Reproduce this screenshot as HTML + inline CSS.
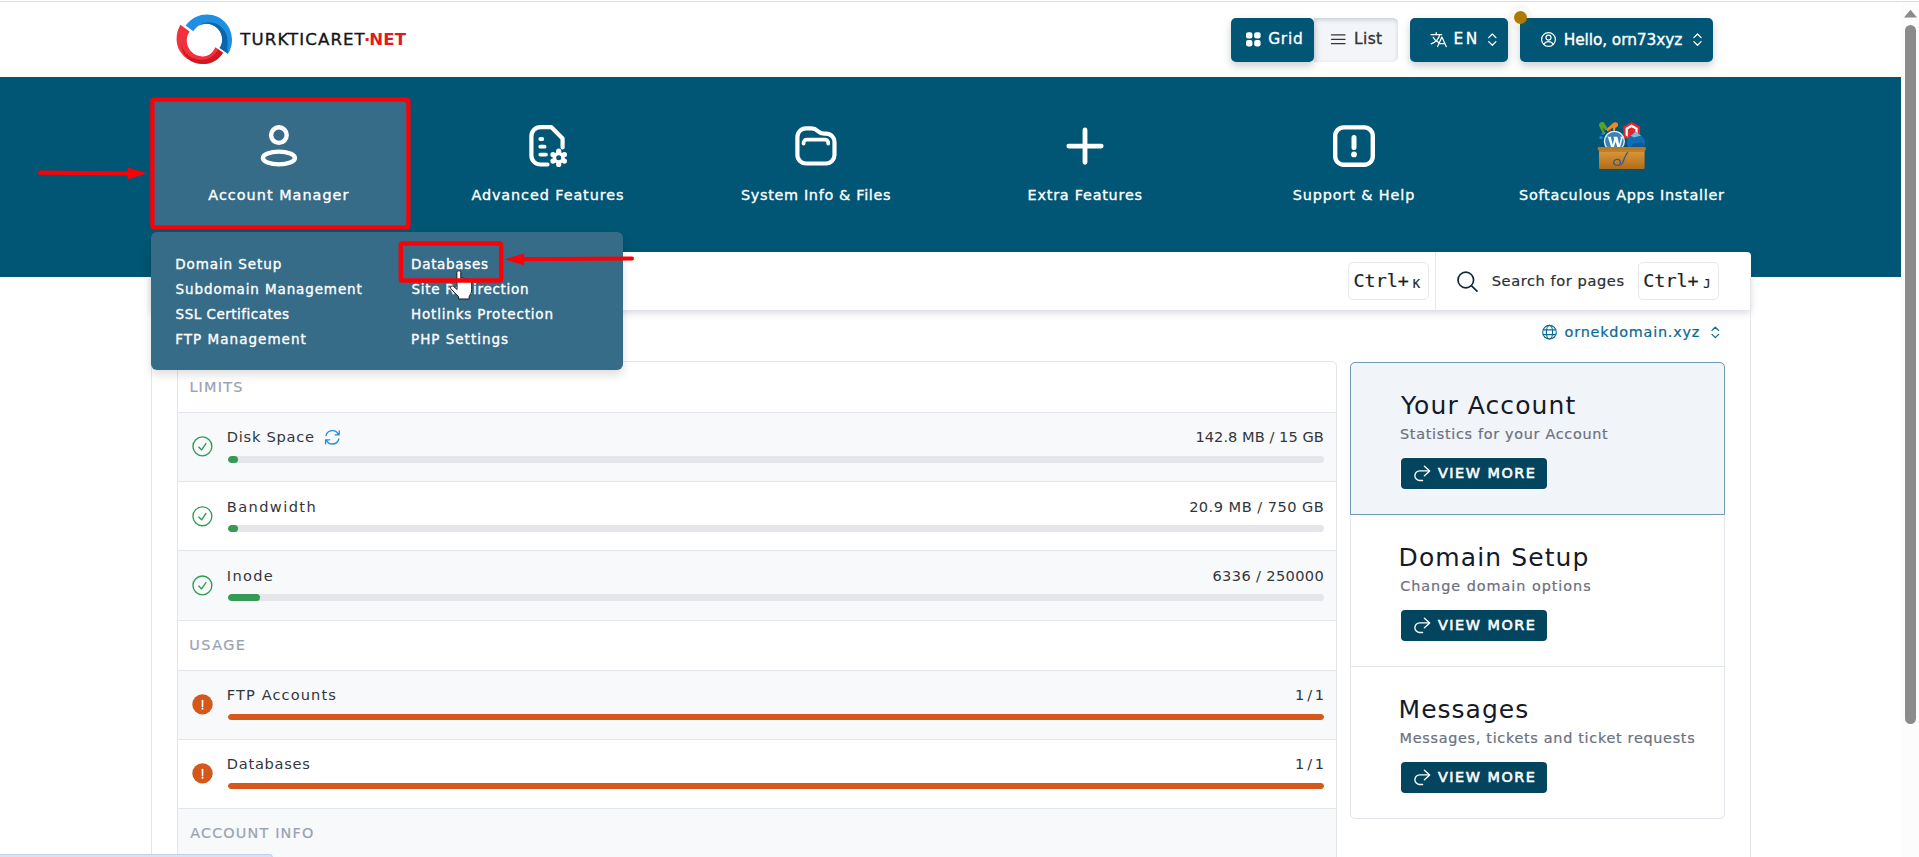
<!DOCTYPE html>
<html lang="en"><head><meta charset="utf-8"><title>Account Manager</title>
<style>
*{box-sizing:border-box;margin:0;padding:0}
html,body{width:1919px;height:857px;overflow:hidden;background:#fff}
body{position:relative;font-family:'DejaVu Sans','Liberation Sans',sans-serif;color:#333}
.t{position:absolute;white-space:pre;line-height:normal}
.m{-webkit-text-stroke:.35px currentColor}
.sb6{-webkit-text-stroke:.6px currentColor}
.m2{-webkit-text-stroke:.22px currentColor}
.abs,header,nav,main,aside,section,.tile,.btn,.row,.card{position:absolute}
#topline{left:0;top:1px;width:1919px;height:1px;background:#dcdcdc}
header{left:0;top:0;width:1901px;height:77px}
.btn{top:18px;height:44px;border-radius:5px;background:#005674;box-shadow:0 4px 8px rgba(0,40,60,.22)}
nav.band{left:0;top:77px;width:1901px;height:200px;background:#005674}
.tile{top:23.5px;width:256.67px;height:126px;border-radius:5px}
.tile.on{background:#366c88}
.drop{left:151px;top:232px;width:472px;height:138px;border-radius:6px;background:#366c88;box-shadow:0 5px 10px rgba(0,0,0,.13)}
.search{left:151px;top:252px;width:1600px;height:58px;background:#fff;border-radius:4px;box-shadow:0 3px 7px rgba(40,50,70,.18)}
.kbd{position:absolute;top:10px;height:38px;border:1px solid #e6e8ec;border-radius:5px;background:#fff}
main{left:151px;top:277px;width:1600px;height:600px;border-left:1px solid #e3e5e9;border-right:1px solid #e3e5e9}
.panel{left:177px;top:361px;width:1160px;height:520px;border:1px solid #e3e6ea;border-radius:5px;background:#fff;overflow:hidden}
.row{left:0;width:1158px;border-top:1px solid #e3e6ea}
.row.g{background:#f8f9fb}
.bar{position:absolute;left:50px;width:1096px;height:7px;border-radius:4px;background:#e5e6ea;overflow:hidden}
.bar i{display:block;height:7px;border-radius:4px}
.bar.o{height:6px;border-radius:3px}
.bar.o i{height:6px;border-radius:3px}
.cards{left:1350px;top:362px;width:375px;height:457px;border:1px solid #e3e6ea;border-radius:5px;background:#fff}
.card{left:-1px;width:375px;height:153px}
.card.on{background:#f1f5f9;border:1px solid #6d9bb4;border-radius:5px 5px 0 0}
.vm{position:absolute;left:50px;width:146px;height:31px;border-radius:4px;background:#03455f;box-shadow:0 0 0 1px #fff}
.sb{left:1901px;top:2px;width:18px;height:855px;background:#fcfcfc}
.sb b{position:absolute;left:4px;top:23px;width:11px;height:699px;border-radius:6px;background:#8b8b8b}
.status{left:0;top:854px;width:273px;height:4px;background:#d6e4fb;border-top:1px solid #c3d0e6;border-right:1px solid #c3d0e6;border-radius:0 4px 0 0}
svg{position:absolute;overflow:visible}
</style></head>
<body>
<div id="topline" class="abs"></div>
<header>
<span class="t m" style="left:240.35px;top:30.30px;font-size:16.6px;color:#15151a;letter-spacing:1.087px;">TURKTICARET</span>
<span class="t" style="left:363.91px;top:30.30px;font-size:16.6px;color:#e11b22;font-weight:700;">·</span>
<span class="t" style="left:369.28px;top:30.30px;font-size:16.6px;color:#e11b22;font-weight:700;letter-spacing:0.133px;">NET</span>
<div class="abs" style="left:1314px;top:18px;width:84px;height:44px;border-radius:0 5px 5px 0;background:#f3f5f8;box-shadow:inset 0 2px 4px rgba(60,80,110,.22)"></div>
<div class="btn" style="left:1231px;width:83px;border-radius:5px"></div>
<span class="t m" style="left:1268.14px;top:30.30px;font-size:15.4px;color:#fff;letter-spacing:0.750px;">Grid</span>
<span class="t m" style="left:1353.89px;top:30.30px;font-size:15.4px;color:#333;letter-spacing:0.458px;">List</span>
<div class="btn" style="left:1410px;width:98px"></div>
<span class="t m" style="left:1453.49px;top:30.30px;font-size:15.4px;color:#fff;letter-spacing:2.473px;">EN</span>
<div class="btn" style="left:1520px;width:193px"></div>
<span class="t m" style="left:1563.79px;top:30.50px;font-size:15.4px;color:#fff;letter-spacing:-0.102px;">Hello, orn73xyz</span>
<div class="abs" style="left:1507px;top:4.5px;width:26px;height:26px;border-radius:50%;background:rgba(176,122,0,.045)"></div>
<div class="abs" style="left:1513.8px;top:11.2px;width:13px;height:13px;border-radius:50%;background:#b07a02"></div>
</header>
<nav class="band">
<a class="tile on" style="left:150.50px"></a>
<a class="tile" style="left:419.17px"></a>
<a class="tile" style="left:687.83px"></a>
<a class="tile" style="left:956.50px"></a>
<a class="tile" style="left:1225.17px"></a>
<a class="tile" style="left:1493.83px"></a>
</nav>
<span class="t m" style="left:208.29px;top:186.80px;font-size:14.4px;color:#fff;letter-spacing:1.025px;">Account Manager</span>
<span class="t m" style="left:471.39px;top:186.80px;font-size:14.4px;color:#fff;letter-spacing:0.911px;">Advanced Features</span>
<span class="t m" style="left:741.05px;top:186.80px;font-size:14.4px;color:#fff;letter-spacing:0.668px;">System Info &amp; Files</span>
<span class="t m" style="left:1027.59px;top:186.80px;font-size:14.4px;color:#fff;letter-spacing:0.768px;">Extra Features</span>
<span class="t m" style="left:1292.85px;top:186.80px;font-size:14.4px;color:#fff;letter-spacing:0.874px;">Support &amp; Help</span>
<span class="t m" style="left:1519.05px;top:186.80px;font-size:14.4px;color:#fff;letter-spacing:0.737px;">Softaculous Apps Installer</span>
<div class="search abs">
<div class="kbd" style="left:1196.5px;width:81px"></div>
<div class="abs" style="left:1284px;top:0;width:1px;height:58px;background:#e6e8ec"></div>
<div class="kbd" style="left:1486.5px;width:81px"></div>
</div>
<span class="t m2" style="left:1353.55px;top:270.20px;font-size:18.4px;color:#1d1f24;font-family:'DejaVu Sans Mono',monospace;">Ctrl+</span>
<span class="t m2" style="left:1412.68px;top:276.50px;font-size:12.2px;color:#1d1f24;font-family:'DejaVu Sans Mono',monospace;">K</span>
<span class="t m2" style="left:1491.74px;top:271.90px;font-size:14.6px;color:#2b2f36;letter-spacing:0.582px;">Search for pages</span>
<span class="t m2" style="left:1643.25px;top:270.20px;font-size:18.4px;color:#1d1f24;font-family:'DejaVu Sans Mono',monospace;">Ctrl+</span>
<span class="t m2" style="left:1703.35px;top:276.50px;font-size:12.2px;color:#1d1f24;font-family:'DejaVu Sans Mono',monospace;">J</span>
<main></main>
<span class="t m2" style="left:1564.61px;top:323.80px;font-size:14.4px;color:#0b6a93;letter-spacing:0.776px;">ornekdomain.xyz</span>
<section class="panel">
<div class="row" style="top:-1px;height:51px;border-top:0"></div>
<div class="row g" style="top:50px;height:69px"><div class="bar" style="top:43px"><i style="width:10px;background:#359a56"></i></div></div>
<div class="row" style="top:119px;height:69px"><div class="bar" style="top:43px"><i style="width:10px;background:#359a56"></i></div></div>
<div class="row g" style="top:188px;height:70px"><div class="bar" style="top:43px"><i style="width:32px;background:#359a56"></i></div></div>
<div class="row" style="top:258px;height:50px"></div>
<div class="row g" style="top:308px;height:69px"><div class="bar o" style="top:43px"><i style="width:1096px;background:#d5581d"></i></div></div>
<div class="row" style="top:377px;height:69px"><div class="bar o" style="top:43px"><i style="width:1096px;background:#d5581d"></i></div></div>
<div class="row g" style="top:446px;height:80px"></div>
</section>
<span class="t m2" style="left:189.39px;top:378.90px;font-size:14.4px;color:#9aa3b1;letter-spacing:1.211px;">LIMITS</span>
<span class="t m2" style="left:189.25px;top:636.70px;font-size:14.4px;color:#9aa3b1;letter-spacing:1.473px;">USAGE</span>
<span class="t m2" style="left:190.19px;top:824.70px;font-size:14.4px;color:#9aa3b1;letter-spacing:1.166px;">ACCOUNT INFO</span>
<span class="t" style="left:226.77px;top:427.90px;font-size:14.6px;color:#33363b;letter-spacing:0.760px;">Disk Space</span>
<span class="t" style="left:226.77px;top:497.80px;font-size:14.6px;color:#33363b;letter-spacing:1.409px;">Bandwidth</span>
<span class="t" style="left:226.77px;top:566.70px;font-size:14.6px;color:#33363b;letter-spacing:1.319px;">Inode</span>
<span class="t" style="left:226.77px;top:685.60px;font-size:14.6px;color:#33363b;letter-spacing:1.101px;">FTP Accounts</span>
<span class="t" style="left:226.77px;top:754.60px;font-size:14.6px;color:#33363b;letter-spacing:0.737px;">Databases</span>
<span class="t" style="left:1195.40px;top:427.90px;font-size:14.6px;color:#33363b;letter-spacing:0.046px;">142.8 MB / 15 GB</span>
<span class="t" style="left:1189.13px;top:497.80px;font-size:14.6px;color:#33363b;letter-spacing:0.464px;">20.9 MB / 750 GB</span>
<span class="t" style="left:1212.48px;top:566.70px;font-size:14.6px;color:#33363b;letter-spacing:0.354px;">6336 / 250000</span>
<span class="t" style="left:1295.10px;top:685.60px;font-size:14.6px;color:#33363b;letter-spacing:-0.929px;">1 / 1</span>
<span class="t" style="left:1295.10px;top:754.60px;font-size:14.6px;color:#33363b;letter-spacing:-0.929px;">1 / 1</span>
<aside class="cards">
<div class="card on" style="top:-1px;"><div class="vm" style="top:95px;left:50px"></div></div>
<div class="card" style="top:151px;"><div class="vm" style="top:96px;left:51px"></div></div>
<div class="card" style="top:303px;border-top:1px solid #e3e6ea;"><div class="vm" style="top:95px;left:51px"></div></div>
</aside>
<span class="t" style="left:1401.05px;top:391.40px;font-size:25px;color:#141a2a;letter-spacing:1.080px;">Your Account</span>
<span class="t m2" style="left:1400.05px;top:426.40px;font-size:14.4px;color:#6c727e;letter-spacing:0.686px;">Statistics for your Account</span>
<span class="t sb6" style="left:1437.89px;top:465.00px;font-size:14.4px;color:#fff;letter-spacing:1.526px;">VIEW MORE</span>
<span class="t" style="left:1398.55px;top:543.40px;font-size:25px;color:#141a2a;letter-spacing:1.099px;">Domain Setup</span>
<span class="t m2" style="left:1400.19px;top:578.40px;font-size:14.4px;color:#6c727e;letter-spacing:0.968px;">Change domain options</span>
<span class="t sb6" style="left:1437.89px;top:617.00px;font-size:14.4px;color:#fff;letter-spacing:1.526px;">VIEW MORE</span>
<span class="t" style="left:1398.55px;top:695.40px;font-size:25px;color:#141a2a;letter-spacing:1.009px;">Messages</span>
<span class="t m2" style="left:1399.59px;top:730.40px;font-size:14.4px;color:#6c727e;letter-spacing:0.699px;">Messages, tickets and ticket requests</span>
<span class="t sb6" style="left:1437.89px;top:769.00px;font-size:14.4px;color:#fff;letter-spacing:1.526px;">VIEW MORE</span>
<svg class="ic" width="1919" height="857" viewBox="0 0 1919 857" style="left:0;top:0" fill="none" stroke-linecap="round" stroke-linejoin="round"><g stroke="none">
<path fill="#1e8fe3" d="M185.6 25.6 C192 17.5 200 14.4 207.5 14.6 C221 15 231.5 25.5 232 39 C232.2 44.5 230.8 49.5 228 53.8 L219.6 48 C221.4 45.3 222.3 42.2 222.2 39 C221.9 30.5 214.8 23.6 206.3 23.7 C201.3 23.7 196.6 26 193.3 31.2 Z"/>
<path fill="#0b65a9" d="M208.5 22.3 C219 22 227.5 30.5 227.6 41 C227.6 45 227 49 228 53.8 L219.6 48 C221.4 45.3 222.3 42.2 222.2 39 C221.9 30.6 215 23.7 206.4 23.7 C204 23.7 201.5 24.3 199.5 25.3 C202.2 23.4 205.3 22.4 208.5 22.3 Z"/>
<path fill="#f0323e" d="M180.4 24.8 L189.6 31.6 C187.6 34.6 186.6 38 186.8 41.5 C187.3 50 194.5 56.6 203 56.4 C207.6 56.3 211.8 54.3 215.4 47.2 L223 52.8 C218.5 60.3 211 64.2 203.2 64 C189.5 63.7 176.8 53.5 176.6 39.5 C176.5 34.2 177.8 29.2 180.4 24.8 Z"/>
<path fill="#d3161f" d="M181.5 45 C184 54 192.5 60 201.7 59.8 C208.6 59.6 214.8 56.3 218.2 49.3 L223 52.8 C218.5 60.3 211 64.2 203.2 64 C190 63.7 181.8 55.5 181.5 45 Z"/>
</g>
<g fill="#fff" stroke="none"><rect x="1246" y="32.2" width="6.4" height="6.4" rx="2.1"/><rect x="1254.2" y="32.2" width="6.4" height="6.4" rx="2.1"/><rect x="1246" y="40" width="6.4" height="6.4" rx="2.1"/><rect x="1254.2" y="40" width="6.4" height="6.4" rx="2.1"/></g>
<path stroke="#333" stroke-width="1.3" d="M1331.5 34.9H1345M1331.5 39.3H1345M1331.5 43.7H1345"/>
<g stroke="#fff" stroke-width="1.25"><path d="M1431 34.6H1441.6M1436.2 32.6V34.6M1439.8 34.6C1438.8 38.8 1435.6 42.2 1431.2 43.8M1433.2 37.2C1434.6 40 1436.6 41.6 1439 42.6"/><path d="M1437.6 46.6L1441.9 37L1446.2 46.6M1439 43.6H1444.8"/></g>
<path stroke="#fff" stroke-width="1.3" d="M1488.7 37.6L1492.3 34L1495.8999999999999 37.6M1488.7 41.6L1492.3 45.2L1495.8999999999999 41.6"/>
<path stroke="#fff" stroke-width="1.3" d="M1693.9 37.6L1697.5 34L1701.1 37.6M1693.9 41.6L1697.5 45.2L1701.1 41.6"/>
<g stroke="#fff" stroke-width="1.25"><circle cx="1548.5" cy="39.5" r="6.9"/><circle cx="1548.5" cy="37.6" r="2.5"/><path d="M1543.8 44.4C1545 42.3 1546.7 41.6 1548.5 41.6C1550.3 41.6 1552 42.3 1553.2 44.4"/></g>
<g stroke="#fff" stroke-width="4.4"><circle cx="278.9" cy="135.1" r="7.8"/><ellipse cx="278.9" cy="158" rx="16" ry="6.4"/></g>
<g stroke="#fff" stroke-width="4.2"><path d="M547.5 164.5H540.4A9 9 0 0 1 531.4 155.5V136.1A9 9 0 0 1 540.4 127.1H551.2L562.6 138.5V147.5"/><path stroke-width="3.8" d="M540.3 139H542.3M540.3 146.7H544.6M540.3 154.6H546"/></g>
<g stroke="none" fill="#fff"><circle cx="558.7" cy="157.8" r="6.1"/><circle cx="564.42" cy="161.10" r="2.6"/><circle cx="558.70" cy="164.40" r="2.6"/><circle cx="552.98" cy="161.10" r="2.6"/><circle cx="552.98" cy="154.50" r="2.6"/><circle cx="558.70" cy="151.20" r="2.6"/><circle cx="564.42" cy="154.50" r="2.6"/><circle cx="558.7" cy="157.8" r="2.5" fill="#005674"/></g>
<g stroke="#fff" stroke-width="4.2"><path d="M797.4 155V136.9A8.5 8.5 0 0 1 805.9 128.4H811.5C814.5 128.4 816 129.4 818 131.2C819.8 132.9 821.3 133.6 824 133.6H826A8.5 8.5 0 0 1 834.5 142.1V155A8.5 8.5 0 0 1 826 163.5H805.9A8.5 8.5 0 0 1 797.4 155Z"/><path stroke-width="3.8" d="M803.6 143.6V142.8A3.2 3.2 0 0 1 806.8 139.6H825A3.2 3.2 0 0 1 828.2 142.8V143.6"/></g>
<path stroke="#fff" stroke-width="4.8" d="M1085 130V162.3M1068.8 146.1H1101.2"/>
<g stroke="#fff" stroke-width="4.4"><rect x="1335.2" y="127.4" width="37.6" height="37.4" rx="8.5"/><path stroke-width="5" d="M1354 137.6V147.4"/></g><circle cx="1354" cy="154.4" r="2.9" fill="#fff"/>
<defs><linearGradient id="bx" x1="0" y1="0" x2="0" y2="1"><stop offset="0" stop-color="#dc9a3e"/><stop offset="1" stop-color="#b36c17"/></linearGradient></defs>
<g stroke="none">
<path fill="#5aa12a" d="M1599.4 123.6C1600.6 121.6 1603.6 121.6 1604.6 123.4L1607.6 128.2L1605.6 130.2L1602.4 127.6L1605.6 133.6L1603.6 134.6L1599.8 127.4C1599 126 1598.8 124.8 1599.4 123.6Z"/>
<path fill="#f08a24" d="M1606 129.4L1612.6 123.4C1614.2 121.6 1617.4 121.8 1618 124C1618.6 126 1617 127.4 1615.6 127.6L1614.8 131L1612.8 130.4L1613 127.2L1608 131.6Z"/>
<path fill="#d62828" d="M1609.5 129.5L1612 132L1610.8 133L1608.4 130.6Z"/>
<circle fill="#2a7fd0" cx="1601" cy="137.6" r="1.7"/><circle fill="#2a7fd0" cx="1602.6" cy="133.8" r="1.2"/>
<path fill="#e5262b" d="M1631.6 122L1640 126.6V137L1631.6 141.6L1623.3 137V126.6Z"/>
<path fill="#fff" d="M1631.6 124.6L1637.6 128V135.6L1635.4 136.8V129.2L1631.6 127.2L1627.8 129.2V136.8L1625.6 135.6V128Z"/>
<path fill="#e5262b" d="M1630.4 129.4H1632.8V138H1630.4Z"/>
<circle cx="1614.4" cy="141.3" r="10.6" fill="#dfeaf2"/><circle cx="1614.4" cy="141.3" r="9.2" fill="#3b82b4"/>
<path fill="#fff" transform="translate(0 2.2)" d="M1606.6 134.6H1610.8L1612.6 142.6L1614.2 136.8L1613.4 134.6H1617.4L1619.2 142.6L1620.8 136.4C1621 135.2 1620.4 134.8 1619.8 134.6H1623L1619.8 146H1617.6L1615.6 139.4L1613.6 146H1611.4L1608.2 135.6C1608 135 1607.4 134.7 1606.6 134.6Z"/>
<path fill="#0e6db3" d="M1635.6 131.2C1637.6 134 1645 136 1645 142.4C1645 147.4 1640.8 150.4 1635.9 150.4C1631 150.4 1626.8 147.4 1626.8 142.4C1626.8 136.8 1633.4 134.4 1635.6 131.2Z"/>
<path fill="#e6f0f8" opacity=".55" d="M1635.6 131.2C1636.6 132.6 1639 133.8 1641.2 135.6L1634 137.4L1630.6 135.8C1632.6 134.2 1634.6 132.8 1635.6 131.2Z"/>
<path fill="#0a5a96" d="M1631 146.6C1632 143.6 1635 142.6 1637.4 143.6C1639.4 142 1642.4 142.4 1643.6 144.4L1643 148H1631Z"/>
<rect x="1599" y="149.4" width="45.6" height="19.6" rx="1.2" fill="url(#bx)"/>
<rect x="1597.7" y="147" width="48.1" height="3.6" rx=".8" fill="#b9771f"/>
<rect x="1599" y="150.6" width="45.6" height="1.2" fill="#a8661a" opacity=".6"/>
<path fill="none" stroke="#2b5f93" stroke-width="1.3" stroke-linecap="round" d="M1627.6 152.8C1625.6 154.4 1624.4 158.4 1622.8 162.4C1621.6 165 1618 166 1615.4 165C1612.4 163.8 1613.4 160 1616.4 159.4C1619.4 158.8 1621.4 161.4 1620 163.6"/>
</g>
<g stroke="#102a3b" stroke-width="1.7"><circle cx="1465.8" cy="280" r="7.8"/><path d="M1471.6 285.8L1477 291.2"/></g>
<g stroke="#0b6a93" stroke-width="1.15"><circle cx="1549.5" cy="332.2" r="6.8"/><ellipse cx="1549.5" cy="332.2" rx="3.1" ry="6.8"/><path d="M1543.3 329.8H1555.7M1543.3 334.6H1555.7"/></g>
<path stroke="#0b6a93" stroke-width="1.3" d="M1712 330.4L1715.3 327.2L1718.6 330.4M1712 334.4L1715.3 337.6L1718.6 334.4"/>
<g stroke="#2f9a52" stroke-width="1.35"><circle cx="202.4" cy="446.4" r="9.45"/><path d="M198.8 447.09999999999997L201.6 449.9L205.9 443.59999999999997"/></g>
<g stroke="#2f9a52" stroke-width="1.35"><circle cx="202.4" cy="516.3" r="9.45"/><path d="M198.8 517.0L201.6 519.8L205.9 513.5"/></g>
<g stroke="#2f9a52" stroke-width="1.35"><circle cx="202.4" cy="585.4" r="9.45"/><path d="M198.8 586.1L201.6 588.9L205.9 582.6"/></g>
<circle cx="202.5" cy="704.4" r="10.2" fill="#d4571c"/><path stroke="#fff" stroke-width="1.6" d="M202.5 700.5V706.6"/><circle cx="202.5" cy="708.8" r="1" fill="#fff"/>
<circle cx="202.5" cy="773.4" r="10.2" fill="#d4571c"/><path stroke="#fff" stroke-width="1.6" d="M202.5 769.5V775.6"/><circle cx="202.5" cy="777.8" r="1" fill="#fff"/>
<g stroke="#1d8fdd" stroke-width="1.35"><path d="M326 435.6A6.6 6.6 0 0 1 338.4 434.4M339.2 430.8V434.8H335.2"/><path d="M338.8 439A6.6 6.6 0 0 1 326.4 440.2M325.6 443.8V439.8H329.6"/></g>
<path stroke="#fff" stroke-width="1.35" d="M1422.6 480.5H1419.7A4.8 4.8 0 0 1 1419.7 470.9H1429.4M1424.4 466.2L1429.7 470.9L1424.4 475.8"/>
<path stroke="#fff" stroke-width="1.35" d="M1422.6 632.5H1419.7A4.8 4.8 0 0 1 1419.7 622.9H1429.4M1424.4 618.2L1429.7 622.9L1424.4 627.8"/>
<path stroke="#fff" stroke-width="1.35" d="M1422.6 784.5H1419.7A4.8 4.8 0 0 1 1419.7 774.9H1429.4M1424.4 770.2L1429.7 774.9L1424.4 779.8"/></svg>
<div class="drop abs"></div>
<span class="t m" style="left:175.18px;top:256.00px;font-size:13.5px;color:#fff;letter-spacing:0.916px;">Domain Setup</span>
<span class="t m" style="left:175.61px;top:280.90px;font-size:13.5px;color:#fff;letter-spacing:0.880px;">Subdomain Management</span>
<span class="t m" style="left:175.61px;top:305.80px;font-size:13.5px;color:#fff;letter-spacing:0.496px;">SSL Certificates</span>
<span class="t m" style="left:175.18px;top:330.70px;font-size:13.5px;color:#fff;letter-spacing:1.039px;">FTP Management</span>
<span class="t m" style="left:411.08px;top:256.00px;font-size:13.5px;color:#fff;letter-spacing:0.691px;">Databases</span>
<span class="t m" style="left:411.51px;top:280.90px;font-size:13.5px;color:#fff;letter-spacing:0.706px;">Site Redirection</span>
<span class="t m" style="left:411.08px;top:305.80px;font-size:13.5px;color:#fff;letter-spacing:0.815px;">Hotlinks Protection</span>
<span class="t m" style="left:411.08px;top:330.70px;font-size:13.5px;color:#fff;letter-spacing:0.989px;">PHP Settings</span>
<div class="sb abs"><b></b><svg width="18" height="20" style="left:0;top:0"><path fill="#8b8b8b" d="M3 15.4L9.5 7.8L16 15.4Z"/></svg></div>
<div class="status abs"></div>
<svg class="ic" width="1919" height="857" viewBox="0 0 1919 857" style="left:0;top:0" fill="none" stroke-linecap="round" stroke-linejoin="round"><path fill="#fff" stroke="#14141e" stroke-width="1" stroke-linejoin="round" d="M456.8 272.4C456.8 270.2 460.8 270.2 460.8 272.4V278.4C461.4 277.4 464.4 277.6 464.8 279.2C465.6 278.4 468.2 278.8 468.4 280.2C469.4 279.6 471.7 280.2 471.7 282V289.6C471.7 292.8 470.4 294.6 469.2 296.4V299H458.6V296.8C456.4 294.4 453.2 291.4 451 288.8C449.6 287 451.8 285 453.6 286.4L456.8 289.2Z"/>
<rect x="152.4" y="99.65" width="256" height="127.7" rx="1.6" stroke="#fb0007" stroke-width="4.3"/>
<rect x="400.85" y="243.45" width="100.3" height="37.1" rx="1.6" stroke="#fb0007" stroke-width="4.5"/>
<path stroke="#fb0007" stroke-width="4.2" d="M39.8 172.7L129 173.5"/><path fill="#fb0007" stroke="none" d="M147.2 173.3L127.6 167.5V179.4Z"/>
<path stroke="#fb0007" stroke-width="4" d="M632 258.6L522 259.3"/><path fill="#fb0007" stroke="none" d="M504.4 259.4L524.2 253.5V265.3Z"/></svg>
</body></html>
